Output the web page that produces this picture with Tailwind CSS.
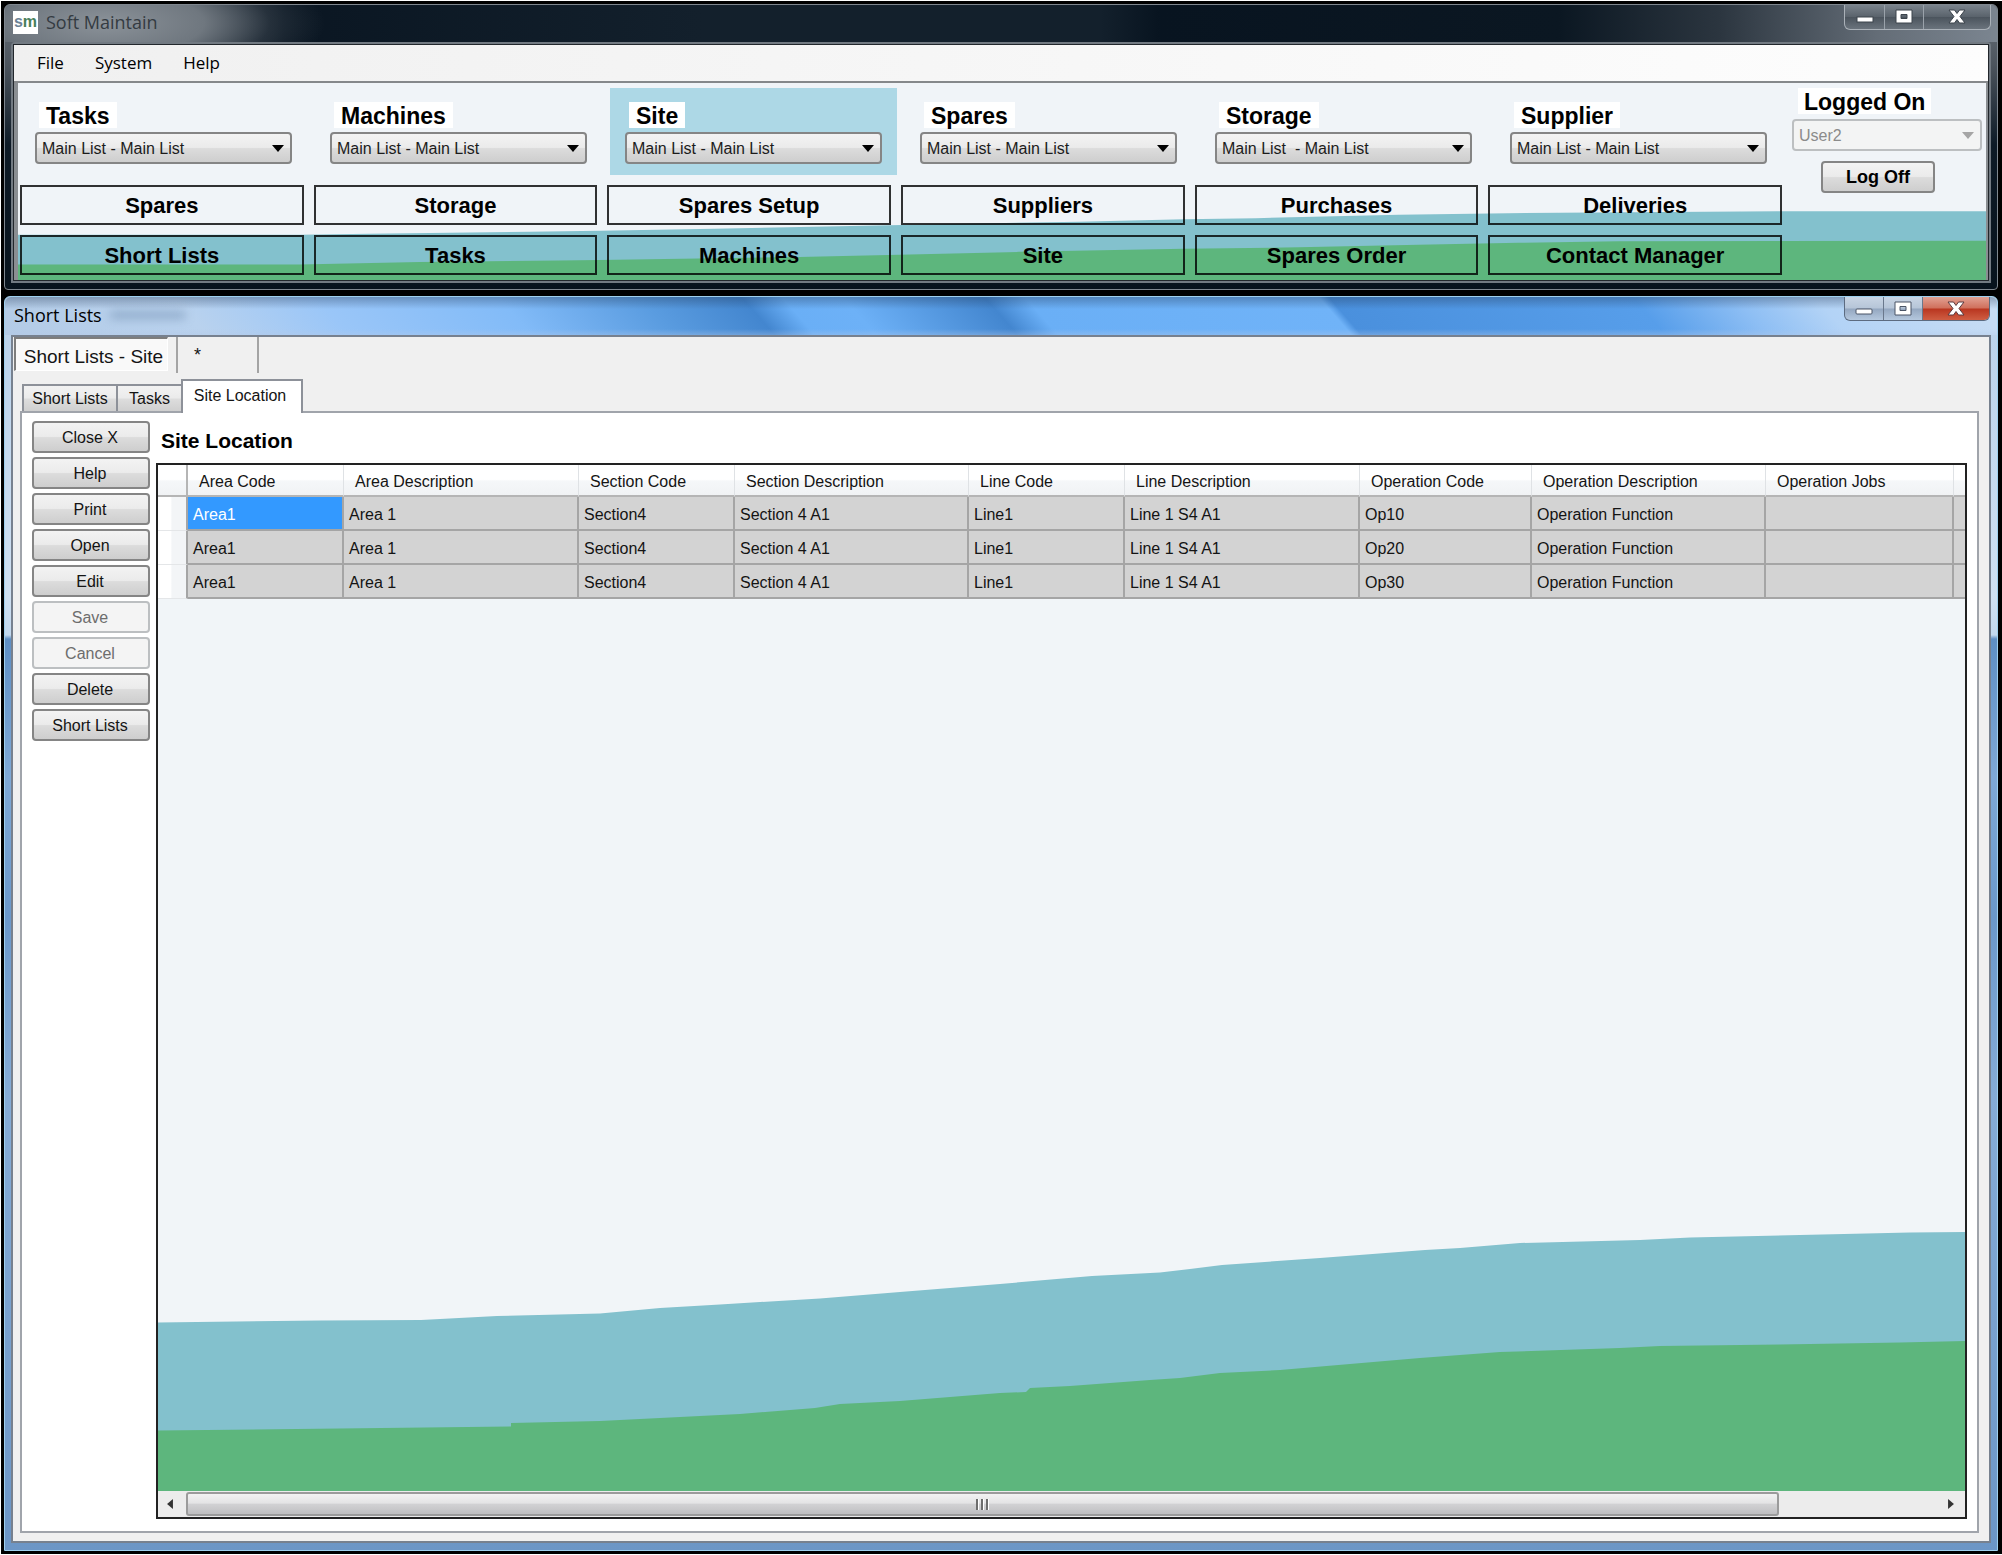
<!DOCTYPE html>
<html lang="en">
<head>
<meta charset="utf-8">
<title>Soft Maintain</title>
<script src="https://cdn.jsdelivr.net/npm/@tailwindcss/browser@4"></script>
</head>
<body class="min-h-screen flex flex-col gap-[6px] bg-black border-t border-l border-b border-white pt-[3px] pl-[3px] pr-1 pb-[3px] font-['Liberation_Sans',Arial,sans-serif] text-[16px] leading-[20px] text-[#141414]">

<!-- Main window -->
<section class="flex flex-col rounded-t-md rounded-b-sm border border-[#7f878f] bg-[linear-gradient(180deg,#6b737b_0px,#4c545d_60px,#0d1a26_140px,#08131d_100%)] px-[6px] pb-[6px]">
  <header class="-mx-[6px] h-[37px] flex items-start justify-between rounded-t-md bg-[radial-gradient(ellipse_220px_70px_at_100px_18px,#8b9299_0%,#6f777f_45%,rgba(60,70,80,0.5)_75%,transparent_100%),linear-gradient(90deg,#5d656d_0%,#3a444e_7%,#0a1622_14%,#13202c_35%,#13202c_55%,#081420_58%,#0b1722_78%,#2b353f_86%,#646d77_94%,#7b8590_100%)]">
    <div class="flex items-center gap-2 pl-2 pt-[5px]">
      <span class="flex h-[23px] w-[25px] items-center justify-center bg-white text-[16px] leading-[16px] font-bold text-[#6c8296]">s<span class="text-[#47805a]">m</span></span>
      <h1 class="font-['Open_Sans','Noto_Sans',sans-serif] text-[18px] leading-[24px] text-[#343b42]">Soft Maintain</h1>
    </div>
    <div class="mr-[6px] flex h-[25px] w-[147px] overflow-hidden rounded-b-md border border-t-0 border-[#aab1b8] bg-[linear-gradient(180deg,#7a838c_0%,#59626b_50%,#4b545d_51%,#6a737c_100%)]">
      <button aria-label="Minimize" class="flex w-[40px] items-center justify-center border-r border-[#9aa2aa]"><svg width="18" height="18" viewBox="0 0 18 18"><rect x="1" y="9" width="16" height="5" fill="#fff" stroke="#3c444c"/></svg></button>
      <button aria-label="Maximize" class="flex w-[39px] items-center justify-center border-r border-[#9aa2aa]"><svg width="18" height="18" viewBox="0 0 18 18"><path d="M1 2h16v13H1zM6 6.500v4h6v-4z" fill="#fff" fill-rule="evenodd" stroke="#3c444c"/></svg></button>
      <button aria-label="Close" class="flex flex-1 items-center justify-center"><svg width="20" height="18" viewBox="0 0 20 18"><path d="M2 2h5.500L10 5.500 12.500 2H18l-5 6.500L18 15h-5.500L10 11.500 7.500 15H2l5-6.500z" fill="#fff" stroke="#3c444c"/></svg></button>
    </div>
  </header>

  <div class="rounded-t-sm border-2 border-[#727a82] bg-white">
    <div class="border border-[#22272c]">
      <nav class="flex h-[38px] items-center gap-[31px] border-b-2 border-[#85888b] bg-[linear-gradient(90deg,#f0f0f0,#fdfdfd)] pl-[23px] font-['Open_Sans','Noto_Sans',sans-serif] text-[17px] leading-[24px] text-black">
        <a href="#file">File</a><a href="#system">System</a><a href="#help">Help</a>
      </nav>
      <div class="relative flex border-l-4 border-r-2 border-[#8a8e92] bg-[#f0f4f8] pt-[5px] pb-[5px]">
        <svg class="absolute inset-0 h-full w-full" viewBox="18 84 1970 196" preserveAspectRatio="none" aria-hidden="true">
          <path fill="#83c1cd" d="M18 235H300L370 234 530 232 600 231 715 229 890 225.500 1080 222 1185 219.500 1257 218.500 1400 215 1560 213 1780 211.500H1988V280H18z"/>
          <path fill="#5db67d" d="M18 264.500H300L420 262 560 260.500 600 260 800 257 900 255 1020 252 1185 249 1300 247.500 1420 245 1520 243 1620 241.500 1988 241V280H18z"/>
        </svg>
        <div class="relative flex flex-1 flex-col gap-[10px] pl-[2px]">
          <div class="grid grid-cols-6 gap-x-2 text-black">
            <div class="flex h-[87px] flex-col items-start gap-1 px-[15px] pt-[14px]">
              <label for="s1" class="ml-1 h-[26px] bg-white px-[7px] text-[23px] leading-[28px] font-bold">Tasks</label>
              <div class="relative w-full"><select id="s1" class="h-[32px] w-full appearance-none rounded-[4px] border-2 border-[#858585] bg-[linear-gradient(180deg,#f3f3f3_0%,#ebebeb_48%,#dcdcdc_52%,#cecece_100%)] pt-[2px] pl-[5px] text-[16px] text-[#1c1c1c]"><option>Main List - Main List</option></select><svg class="pointer-events-none absolute right-2 top-[13px]" width="12" height="7" viewBox="0 0 12 7"><path d="M0 0h12L6 7z"/></svg></div>
            </div>
            <div class="flex h-[87px] flex-col items-start gap-1 px-[15px] pt-[14px]">
              <label for="s2" class="ml-1 h-[26px] bg-white px-[7px] text-[23px] leading-[28px] font-bold">Machines</label>
              <div class="relative w-full"><select id="s2" class="h-[32px] w-full appearance-none rounded-[4px] border-2 border-[#858585] bg-[linear-gradient(180deg,#f3f3f3_0%,#ebebeb_48%,#dcdcdc_52%,#cecece_100%)] pt-[2px] pl-[5px] text-[16px] text-[#1c1c1c]"><option>Main List - Main List</option></select><svg class="pointer-events-none absolute right-2 top-[13px]" width="12" height="7" viewBox="0 0 12 7"><path d="M0 0h12L6 7z"/></svg></div>
            </div>
            <div class="flex h-[87px] flex-col items-start gap-1 bg-[#add8e6] px-[15px] pt-[14px]">
              <label for="s3" class="ml-1 h-[26px] bg-white px-[7px] text-[23px] leading-[28px] font-bold">Site</label>
              <div class="relative w-full"><select id="s3" class="h-[32px] w-full appearance-none rounded-[4px] border-2 border-[#858585] bg-[linear-gradient(180deg,#f3f3f3_0%,#ebebeb_48%,#dcdcdc_52%,#cecece_100%)] pt-[2px] pl-[5px] text-[16px] text-[#1c1c1c]"><option>Main List - Main List</option></select><svg class="pointer-events-none absolute right-2 top-[13px]" width="12" height="7" viewBox="0 0 12 7"><path d="M0 0h12L6 7z"/></svg></div>
            </div>
            <div class="flex h-[87px] flex-col items-start gap-1 px-[15px] pt-[14px]">
              <label for="s4" class="ml-1 h-[26px] bg-white px-[7px] text-[23px] leading-[28px] font-bold">Spares</label>
              <div class="relative w-full"><select id="s4" class="h-[32px] w-full appearance-none rounded-[4px] border-2 border-[#858585] bg-[linear-gradient(180deg,#f3f3f3_0%,#ebebeb_48%,#dcdcdc_52%,#cecece_100%)] pt-[2px] pl-[5px] text-[16px] text-[#1c1c1c]"><option>Main List - Main List</option></select><svg class="pointer-events-none absolute right-2 top-[13px]" width="12" height="7" viewBox="0 0 12 7"><path d="M0 0h12L6 7z"/></svg></div>
            </div>
            <div class="flex h-[87px] flex-col items-start gap-1 px-[15px] pt-[14px]">
              <label for="s5" class="ml-1 h-[26px] bg-white px-[7px] text-[23px] leading-[28px] font-bold">Storage</label>
              <div class="relative w-full"><select id="s5" class="h-[32px] w-full appearance-none rounded-[4px] border-2 border-[#858585] bg-[linear-gradient(180deg,#f3f3f3_0%,#ebebeb_48%,#dcdcdc_52%,#cecece_100%)] pt-[2px] pl-[5px] text-[16px] text-[#1c1c1c]"><option>Main List &nbsp;- Main List</option></select><svg class="pointer-events-none absolute right-2 top-[13px]" width="12" height="7" viewBox="0 0 12 7"><path d="M0 0h12L6 7z"/></svg></div>
            </div>
            <div class="flex h-[87px] flex-col items-start gap-1 px-[15px] pt-[14px]">
              <label for="s6" class="ml-1 h-[26px] bg-white px-[7px] text-[23px] leading-[28px] font-bold">Supplier</label>
              <div class="relative w-full"><select id="s6" class="h-[32px] w-full appearance-none rounded-[4px] border-2 border-[#858585] bg-[linear-gradient(180deg,#f3f3f3_0%,#ebebeb_48%,#dcdcdc_52%,#cecece_100%)] pt-[2px] pl-[5px] text-[16px] text-[#1c1c1c]"><option>Main List - Main List</option></select><svg class="pointer-events-none absolute right-2 top-[13px]" width="12" height="7" viewBox="0 0 12 7"><path d="M0 0h12L6 7z"/></svg></div>
            </div>
          </div>
          <div class="grid grid-cols-[repeat(5,284fr)_294fr] gap-x-[10px] gap-y-[10px] text-[22px] leading-[28px] font-bold text-black">
            <button class="h-[40px] border-2 border-black/80 pt-[2px]">Spares</button>
            <button class="h-[40px] border-2 border-black/80 pt-[2px]">Storage</button>
            <button class="h-[40px] border-2 border-black/80 pt-[2px]">Spares Setup</button>
            <button class="h-[40px] border-2 border-black/80 pt-[2px]">Suppliers</button>
            <button class="h-[40px] border-2 border-black/80 pt-[2px]">Purchases</button>
            <button class="h-[40px] border-2 border-black/80 pt-[2px]">Deliveries</button>
            <button class="h-[40px] border-2 border-black/80 pt-[2px]">Short Lists</button>
            <button class="h-[40px] border-2 border-black/80 pt-[2px]">Tasks</button>
            <button class="h-[40px] border-2 border-black/80 pt-[2px]">Machines</button>
            <button class="h-[40px] border-2 border-black/80 pt-[2px]">Site</button>
            <button class="h-[40px] border-2 border-black/80 pt-[2px]">Spares Order</button>
            <button class="h-[40px] border-2 border-black/80 pt-[2px]">Contact Manager</button>
          </div>
        </div>
        <div class="relative flex w-[204px] flex-col items-start pl-[10px] pr-1 text-black">
          <label for="user" class="ml-[6px] h-[26px] bg-white px-[6px] text-[23px] leading-[28px] font-bold">Logged On</label>
          <div class="relative mt-[5px] w-full"><select id="user" disabled class="h-[32px] w-full appearance-none rounded-[4px] border-2 border-[#bcbfc1] bg-[#f3f4f4] pt-[2px] pl-[5px] text-[16px] text-[#8b8b8b] opacity-100"><option>User2</option></select><svg class="pointer-events-none absolute right-2 top-[13px]" width="12" height="7" viewBox="0 0 12 7"><path fill="#a5a5a5" d="M0 0h12L6 7z"/></svg></div>
          <button class="mt-[10px] ml-[29px] h-[32px] w-[114px] rounded-[4px] border-2 border-[#858585] bg-[linear-gradient(180deg,#f3f3f3_0%,#ebebeb_48%,#dcdcdc_52%,#cecece_100%)] text-[18px] font-bold">Log Off</button>
        </div>
      </div>
    </div>
  </div>
</section>

<!-- Short Lists window -->
<section class="flex flex-1 flex-col rounded-t-md border border-[#9fd0ee] bg-[linear-gradient(180deg,#b9d1ea_0px,#cfe0f2_300px,#c2d8ee_338px,#5f8fc4_342px,#7fa9d6_480px,#6b98ca_620px,#86acd6_800px,#6c96c6_100%)] px-[6px] pb-[7px]">
  <header class="-mx-[6px] h-[38px] flex items-start justify-between rounded-t-md bg-[linear-gradient(180deg,rgba(30,50,80,0.35)_0px,transparent_12px,transparent_32px,rgba(180,200,230,0.35)_38px),linear-gradient(49deg,#b3cbe6_0%,#b9d2ee_10%,#9ac6f8_17%,#82bbf8_26%,#5a9ce0_33%,#4386cf_38%,#6aaff6_40%,#6db1f7_43%,#4386cf_50%,#6aaff6_52%,#70b3f8_66.5%,#4a90dd_67%,#579eea_82%,#8dbef4_87%,#b3d3f6_91%,#c9def4_100%)]">
    <div class="flex items-center gap-2 pl-[9px] pt-[6px]">
      <h2 class="font-['Open_Sans','Noto_Sans',sans-serif] text-[18px] leading-[24px] text-black">Short Lists</h2>
      <span class="h-2 w-[76px] rounded bg-[#47688c]/35 blur-[5px]"></span>
    </div>
    <div class="mr-[7px] flex h-[24px] w-[146px] overflow-hidden rounded-b-md border border-t-0 border-[#5c6b80] bg-[linear-gradient(180deg,#c9d5e4_0%,#b6c5d8_48%,#94a7c0_52%,#b5c8de_100%)]">
      <button aria-label="Minimize" class="flex w-[39px] items-center justify-center border-r border-[#6a788c]"><svg width="18" height="18" viewBox="0 0 18 18"><rect x="1" y="9" width="16" height="5" rx="1" fill="#fff" stroke="#4b5566"/></svg></button>
      <button aria-label="Maximize" class="flex w-[39px] items-center justify-center border-r border-[#6a788c]"><svg width="18" height="18" viewBox="0 0 18 18"><path d="M1 2h16v13H1zM6 6.500v4h6v-4z" fill="#fff" fill-rule="evenodd" stroke="#4b5566"/></svg></button>
      <button aria-label="Close" class="flex flex-1 items-center justify-center bg-[linear-gradient(180deg,#e2a193_0%,#d0705c_48%,#b93620_52%,#cf5e43_100%)]"><svg width="20" height="18" viewBox="0 0 20 18"><path d="M2 2h5.500L10 5.500 12.500 2H18l-5 6.500L18 15h-5.500L10 11.500 7.500 15H2l5-6.500z" fill="#fff" stroke="#5a3b40"/></svg></button>
    </div>
  </header>

  <div class="flex flex-1 flex-col border-2 border-[#77818f] bg-[#f0f0f0] pb-2">
    <div class="flex h-[36px] items-start pl-px" role="tablist">
      <button class="h-[34px] w-[154px] border-t-2 border-l-2 border-r border-b border-t-[#7d7d7d] border-l-[#7d7d7d] border-r-white border-b-white bg-[#f9f9f9] pt-1 pl-1 text-center text-[19px] leading-[24px]">Short Lists - Site</button>
      <button class="ml-2 h-[36px] w-[83px] border-x-2 border-[#a4a4a4] pl-4 text-left text-[18px] leading-[24px]">*</button>
    </div>
    <div class="flex h-[38px] items-end pl-[9px]" role="tablist">
      <button class="h-[27px] w-[96px] border-2 border-b-0 border-[#8d9199] bg-[linear-gradient(180deg,#f2f2f2_0%,#ebebeb_48%,#dddddd_52%,#cfcfcf_100%)]">Short Lists</button>
      <button class="h-[27px] w-[63px] border-t-2 border-[#8d9199] bg-[linear-gradient(180deg,#f2f2f2_0%,#ebebeb_48%,#dddddd_52%,#cfcfcf_100%)]">Tasks</button>
      <button class="relative z-10 -mb-[2px] h-[34px] w-[122px] border-2 border-b-0 border-[#8d9199] bg-white pr-1 pb-[3px]">Site Location</button>
    </div>
    <main class="mx-[7px] mr-[10px] flex flex-1 gap-[6px] border-2 border-[#a0a4ab] bg-white pl-[10px] pr-[10px] pt-2 pb-[12px]">
      <div class="flex w-[118px] shrink-0 flex-col gap-1 [&_button]:pr-[2px] [&_button]:pt-px">
        <button class="h-[32px] rounded-[4px] border-2 border-[#858585] bg-[linear-gradient(180deg,#f3f3f3_0%,#ebebeb_48%,#dcdcdc_52%,#cecece_100%)]">Close X</button>
        <button class="h-[32px] rounded-[4px] border-2 border-[#858585] bg-[linear-gradient(180deg,#f3f3f3_0%,#ebebeb_48%,#dcdcdc_52%,#cecece_100%)]">Help</button>
        <button class="h-[32px] rounded-[4px] border-2 border-[#858585] bg-[linear-gradient(180deg,#f3f3f3_0%,#ebebeb_48%,#dcdcdc_52%,#cecece_100%)]">Print</button>
        <button class="h-[32px] rounded-[4px] border-2 border-[#858585] bg-[linear-gradient(180deg,#f3f3f3_0%,#ebebeb_48%,#dcdcdc_52%,#cecece_100%)]">Open</button>
        <button class="h-[32px] rounded-[4px] border-2 border-[#858585] bg-[linear-gradient(180deg,#f3f3f3_0%,#ebebeb_48%,#dcdcdc_52%,#cecece_100%)]">Edit</button>
        <button disabled class="h-[32px] rounded-[4px] border-2 border-[#bcbfc1] bg-[#f4f4f4] text-[#6d6d6d]">Save</button>
        <button disabled class="h-[32px] rounded-[4px] border-2 border-[#bcbfc1] bg-[#f4f4f4] text-[#6d6d6d]">Cancel</button>
        <button class="h-[32px] rounded-[4px] border-2 border-[#858585] bg-[linear-gradient(180deg,#f3f3f3_0%,#ebebeb_48%,#dcdcdc_52%,#cecece_100%)]">Delete</button>
        <button class="h-[32px] rounded-[4px] border-2 border-[#858585] bg-[linear-gradient(180deg,#f3f3f3_0%,#ebebeb_48%,#dcdcdc_52%,#cecece_100%)]">Short Lists</button>
      </div>
      <div class="flex min-w-0 flex-1 flex-col">
        <h3 class="h-[42px] pt-[6px] pl-[5px] text-[21px] leading-[28px] font-bold text-black">Site Location</h3>
        <div class="flex flex-1 flex-col border-2 border-[#222]">
          <div class="relative flex-1 overflow-hidden bg-[#f1f5f8]">
            <svg class="absolute bottom-0 left-0 h-[300px] w-full" viewBox="158 1192 1807 300" preserveAspectRatio="none" aria-hidden="true">
              <path fill="#83c1cd" d="M157 1323.500L320 1321.500 421 1321 497 1317 600 1314.500 660 1309 720 1305.500 820 1299.500 900 1293 1000 1285 1045 1281 1092 1277 1160 1273.500 1190 1270 1222 1266 1320 1259 1425 1251 1460 1249 1520 1244 1640 1241 1690 1238.500 1910 1233.500 1966 1233V1492H157z"/>
              <path fill="#5db67d" d="M157 1431.500L511 1427.500V1424L600 1422 740 1415 815 1409 840 1405 900 1402 1000 1394 1026 1393 1030 1389 1070 1387 1150 1381 1180 1379 1220 1374 1280 1371 1350 1365 1420 1359 1500 1353 1620 1349 1660 1347 1780 1345.500 1900 1343.500 1966 1342V1492H157z"/>
            </svg>
            <table class="relative w-[1950px] table-fixed border-separate border-spacing-0 text-left whitespace-nowrap">
              <colgroup><col class="w-[30px]"><col class="w-[156px]"><col class="w-[235px]"><col class="w-[156px]"><col class="w-[234px]"><col class="w-[156px]"><col class="w-[235px]"><col class="w-[172px]"><col class="w-[234px]"><col class="w-[188px]"><col></colgroup>
              <thead class="bg-[linear-gradient(180deg,#ffffff_0%,#ffffff_45%,#f5f7f9_50%,#f0f2f4_100%)] [&_th]:pt-[3px]">
                <tr class="h-[32px]">
                  <th class="border-r-2 border-b-2 border-[#b5b5b5]"></th>
                  <th class="border-r border-b-2 border-r-[#dfe2e5] border-b-[#b5b5b5] pl-[11px] font-normal">Area Code</th>
                  <th class="border-r border-b-2 border-r-[#dfe2e5] border-b-[#b5b5b5] pl-[11px] font-normal">Area Description</th>
                  <th class="border-r border-b-2 border-r-[#dfe2e5] border-b-[#b5b5b5] pl-[11px] font-normal">Section Code</th>
                  <th class="border-r border-b-2 border-r-[#dfe2e5] border-b-[#b5b5b5] pl-[11px] font-normal">Section Description</th>
                  <th class="border-r border-b-2 border-r-[#dfe2e5] border-b-[#b5b5b5] pl-[11px] font-normal">Line Code</th>
                  <th class="border-r border-b-2 border-r-[#dfe2e5] border-b-[#b5b5b5] pl-[11px] font-normal">Line Description</th>
                  <th class="border-r border-b-2 border-r-[#dfe2e5] border-b-[#b5b5b5] pl-[11px] font-normal">Operation Code</th>
                  <th class="border-r border-b-2 border-r-[#dfe2e5] border-b-[#b5b5b5] pl-[11px] font-normal">Operation Description</th>
                  <th class="border-r border-b-2 border-r-[#dfe2e5] border-b-[#b5b5b5] pl-[11px] font-normal">Operation Jobs</th>
                  <th class="border-b-2 border-[#b5b5b5]"></th>
                </tr>
              </thead>
              <tbody class="[&_td]:border-r-2 [&_td]:border-b-2 [&_td]:border-[#a5a5a5] [&_td]:bg-[#d3d3d3] [&_td]:pt-[3px] [&_td]:pl-[5px] [&_th]:border-r-2 [&_th]:border-b [&_th]:border-r-[#a5a5a5] [&_th]:border-b-[#e4e6e8] [&_th]:bg-[linear-gradient(90deg,#ffffff_45%,#f3f5f7_50%)]">
                <tr class="h-[34px]"><th></th><td class="bg-[#3399ff]! text-white">Area1</td><td>Area 1</td><td>Section4</td><td>Section 4 A1</td><td>Line1</td><td>Line 1 S4 A1</td><td>Op10</td><td>Operation Function</td><td></td><td></td></tr>
                <tr class="h-[34px]"><th></th><td>Area1</td><td>Area 1</td><td>Section4</td><td>Section 4 A1</td><td>Line1</td><td>Line 1 S4 A1</td><td>Op20</td><td>Operation Function</td><td></td><td></td></tr>
                <tr class="h-[34px]"><th></th><td>Area1</td><td>Area 1</td><td>Section4</td><td>Section 4 A1</td><td>Line1</td><td>Line 1 S4 A1</td><td>Op30</td><td>Operation Function</td><td></td><td></td></tr>
              </tbody>
            </table>
          </div>
          <div class="flex h-[26px] items-stretch bg-[#ececec] py-[1px]">
            <button aria-label="Scroll left" class="flex w-[28px] items-center justify-center pr-1"><svg width="6" height="10" viewBox="0 0 7 12"><path fill="#333" d="M7 0v12L0 6z"/></svg></button>
            <div class="flex flex-1">
              <div class="flex w-[91%] items-center justify-center gap-[2px] rounded-[3px] border-2 border-[#9b9b9b] bg-[linear-gradient(180deg,#f2f2f2_0%,#e4e4e5_45%,#d1d1d3_52%,#bfbfc1_100%)]">
                <span class="h-[11px] w-[3px] border-r border-white bg-[#6d6d6d]"></span><span class="h-[11px] w-[3px] border-r border-white bg-[#6d6d6d]"></span><span class="h-[11px] w-[3px] border-r border-white bg-[#6d6d6d]"></span>
              </div>
            </div>
            <button aria-label="Scroll right" class="flex w-[28px] items-center justify-center"><svg width="6" height="10" viewBox="0 0 7 12"><path fill="#333" d="M0 0v12l7-6z"/></svg></button>
          </div>
        </div>
      </div>
    </main>
  </div>
</section>
</body>
</html>
